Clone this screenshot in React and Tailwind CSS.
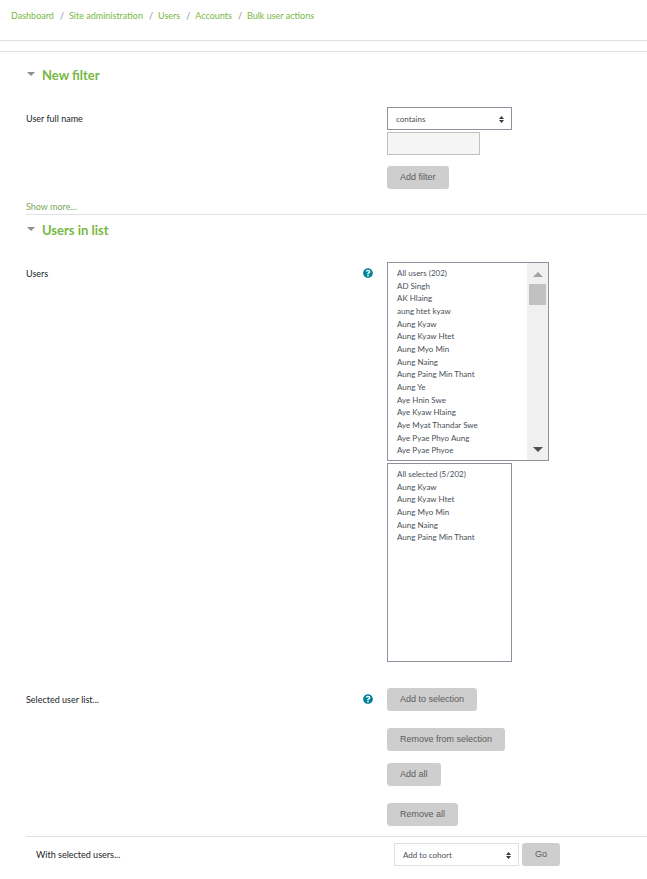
import { useState } from "react";
import { FaQuestionCircle } from "react-icons/fa";

const crumbs = ["Dashboard", "Site administration", "Users", "Accounts", "Bulk user actions"];

const allUsers = [
  "All users (202)",
  "AD Singh",
  "AK Hlaing",
  "aung htet kyaw",
  "Aung Kyaw",
  "Aung Kyaw Htet",
  "Aung Myo Min",
  "Aung Naing",
  "Aung Paing Min Thant",
  "Aung Ye",
  "Aye Hnin Swe",
  "Aye Kyaw Hlaing",
  "Aye Myat Thandar Swe",
  "Aye Pyae Phyo Aung",
  "Aye Pyae Phyoe",
  "Aye Su Su Aung",
];

const selectedUsers = [
  "All selected (5/202)",
  "Aung Kyaw",
  "Aung Kyaw Htet",
  "Aung Myo Min",
  "Aung Naing",
  "Aung Paing Min Thant",
];

function Button({ children, className = "", type = "button" }) {
  return (
    <button
      type={type}
      className={`h-[23px] rounded-[3px] bg-[#cecece] px-[13px] pb-[2px] font-['Liberation_Sans',sans-serif] text-[9px] text-[#5c5c5c] ${className}`}
    >
      {children}
    </button>
  );
}

function Dropdown({ id, label, options, className = "" }) {
  return (
    <div className={`relative h-[23px] w-[125px] border bg-white ${className}`}>
      <select
        id={id}
        aria-label={label}
        className="block h-full w-full appearance-none bg-transparent px-2 text-[8px] text-[#495057] outline-none"
      >
        {options.map((o) => (
          <option key={o}>{o}</option>
        ))}
      </select>
      <svg viewBox="0 0 5 7" className="pointer-events-none absolute top-2 right-[7px] h-[7px] w-[5px]" fill="#343a40">
        <path d="M2.5 0 0 3h5zM2.5 7 0 4h5z" />
      </svg>
    </div>
  );
}

function ListBox({ label, options, className = "" }) {
  return (
    <select
      multiple
      aria-label={label}
      className={`block overflow-y-auto bg-white px-[9px] py-1 text-[8px] text-[#495057] outline-none [scrollbar-width:none] ${className}`}
    >
      {options.map((o) => (
        <option key={o} className="min-h-[13px] p-0 pt-px nth-[3n+2]:min-h-3">
          {o}
        </option>
      ))}
    </select>
  );
}

function ScrollBar() {
  return (
    <div className="flex w-[21px] flex-col items-center bg-[#f0f0f0] py-2">
      <svg viewBox="0 0 10 5" className="mt-px h-[5px] w-[10px]" fill="#a3a3a3">
        <path d="M5 0 0 5h10z" />
      </svg>
      <div className="mt-[7px] h-[21px] w-[17px] bg-[#c1c1c1]" />
      <svg viewBox="0 0 10 5" className="mt-auto h-[5px] w-[10px]" fill="#505050">
        <path d="M5 5 0 0h10z" />
      </svg>
    </div>
  );
}

function Section({ title, children }) {
  const [open, setOpen] = useState(true);
  return (
    <section>
      <h3 className="h-8">
        <button
          type="button"
          aria-expanded={open}
          onClick={() => setOpen(!open)}
          className="flex h-[30px] items-center text-[13px] font-bold text-[#78b843]"
        >
          <svg viewBox="0 0 8 4" className="mr-[7px] mb-[2px] ml-px h-1 w-2" fill="#8f8f8f">
            <path d="M0 0h8L4 4z" />
          </svg>
          {title}
        </button>
      </h3>
      {open && children}
    </section>
  );
}

function Row({ label, htmlFor, help, children }) {
  return (
    <div className="grid grid-cols-[361px_1fr]">
      <div className="flex h-[23px] items-center justify-between pr-[14px]">
        <label htmlFor={htmlFor}>{label}</label>
        {help && (
          <button type="button" aria-label={help} className="mb-[2px] text-[#008196]">
            <FaQuestionCircle size={10} />
          </button>
        )}
      </div>
      <div>{children}</div>
    </div>
  );
}

export default function App() {
  return (
    <div className="bg-white pb-3 font-['Lato',sans-serif] text-[9px] leading-3 text-[#212529]">
      <nav aria-label="Breadcrumb" className="h-[41px] border-b border-[#dee2e6] pt-[10px] pl-[11px]">
        <ol className="flex">
          {crumbs.map((c, i) => (
            <li key={c} className="flex">
              {i > 0 && <span className="pr-[5px] pl-[6px] text-[#868e96]">/</span>}
              <a href="#" className="text-[#78b843]">
                {c}
              </a>
            </li>
          ))}
        </ol>
      </nav>

      <main className="mt-[10px] border-t border-[#dee2e6] pt-2 pl-[26px]">
        <Section title="New filter">
          <div className="pt-[15px] pb-px">
            <Row label="User full name" htmlFor="fullname-op">
              <Dropdown
                id="fullname-op"
                options={["contains", "doesn't contain", "is equal to", "starts with", "ends with", "is empty"]}
                className="border-[#8f919d]"
              />
              <input
                type="text"
                aria-label="User full name value"
                className="mt-[2px] block h-[23px] w-[93px] border border-[#c0c0c0] bg-[#f5f5f5] px-2 outline-none"
              />
              <Button className="mt-[11px]" type="submit">
                Add filter
              </Button>
            </Row>
            <a href="#" className="mt-3 inline-block text-[#78a858]">
              Show more...
            </a>
          </div>
        </Section>

        <div className="border-t border-[#dee2e6]">
          <Section title="Users in list">
            <div className="pt-[15px]">
              <Row label="Users" help="Help with Users">
                <div className="flex h-[199px] w-[162px] border border-[#8f919d]">
                  <ListBox label="Available" options={allUsers} className="h-full min-w-0 flex-1" />
                  <ScrollBar />
                </div>
                <ListBox
                  label="Selected"
                  options={selectedUsers}
                  className="mt-[2px] h-[199px] w-[125px] border border-[#8f919d]"
                />
              </Row>
            </div>
            <div className="pt-[26px] pb-[10px]">
              <Row label="Selected user list..." help="Help with Selected user list">
                <div className="flex flex-col items-start">
                  <Button>Add to selection</Button>
                  <Button className="mt-[17px]">Remove from selection</Button>
                  <Button className="mt-3">Add all</Button>
                  <Button className="mt-[17px]">Remove all</Button>
                </div>
              </Row>
            </div>
          </Section>
        </div>

        <form className="flex items-center border-t border-[#dee2e6] pt-[6px] pl-[10px]">
          <label htmlFor="bulk-action" className="w-[358px]">
            With selected users...
          </label>
          <Dropdown
            id="bulk-action"
            options={["Add to cohort", "Confirm", "Send a message", "Delete", "Force password change"]}
            className="border-[#dee2e6]"
          />
          <Button className="ml-[3px]" type="submit">
            Go
          </Button>
        </form>
      </main>
    </div>
  );
}
